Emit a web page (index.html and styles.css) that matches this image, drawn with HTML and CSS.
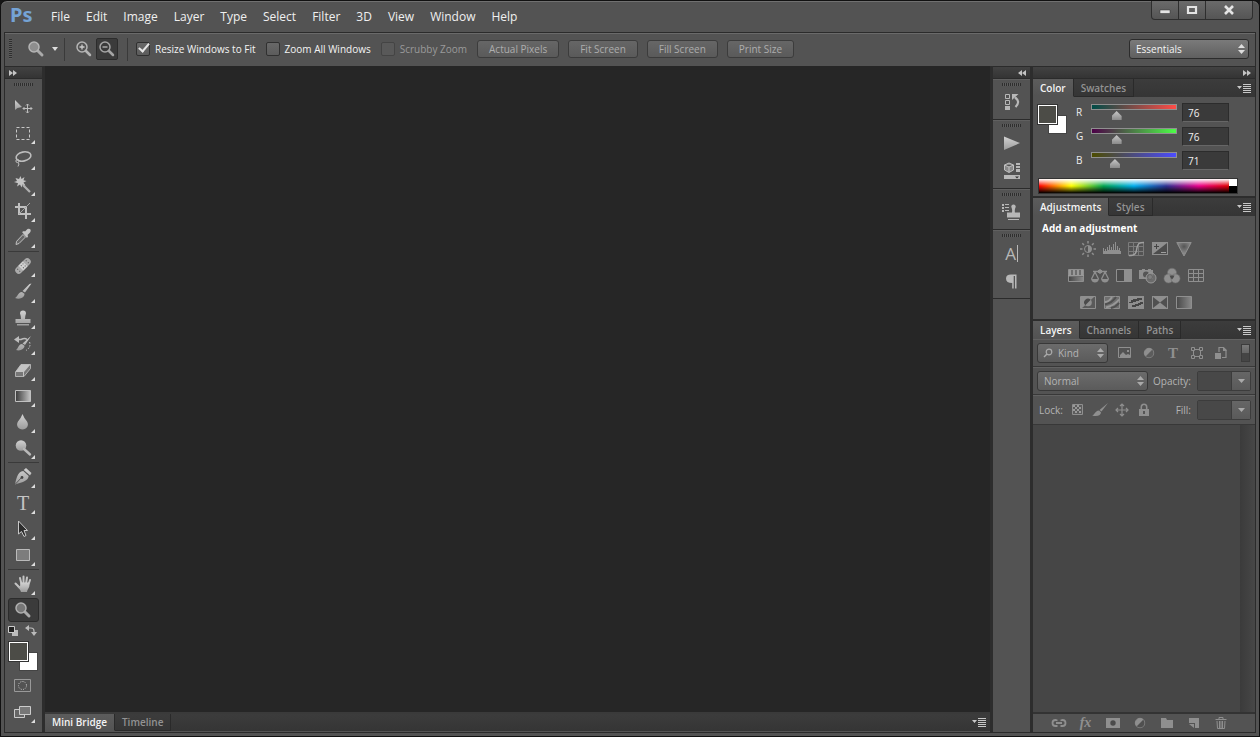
FILE: index.html
```html
<!DOCTYPE html>
<html lang="en">
<head>
    <meta charset="UTF-8">
    <meta name="viewport" content="width=device-width, initial-scale=1.0">
    <title>Ps</title>
    <link rel="stylesheet" href="styles.css">
</head>
<body>

    <!-- Shared gradients -->
    <svg class="defs" width="0" height="0" aria-hidden="true">
        <defs>
            <linearGradient id="metal" x1="0" y1="0" x2="0" y2="1"><stop offset="0" stop-color="#d2d2d2"/><stop offset="1" stop-color="#9c9c9c"/></linearGradient>
            <linearGradient id="fade" x1="0" y1="0" x2="1" y2="0"><stop offset="0" stop-color="#3a3a3a"/><stop offset="1" stop-color="#c4c4c4"/></linearGradient>
            <linearGradient id="fadeDim" x1="0" y1="0" x2="1" y2="0"><stop offset="0" stop-color="#484848"/><stop offset="1" stop-color="#8a8a8a"/></linearGradient>
            <radialGradient id="coneDim" cx="0.5" cy="0.3" r="0.5"><stop offset="0" stop-color="#555"/><stop offset="1" stop-color="#8a8a8a"/></radialGradient>
        </defs>
    </svg>

    <div class="window">

        <!-- Menu bar -->
        <header class="menubar">
            <div class="logo">Ps</div>
            <nav class="menu">
                <a href="#">File</a>
                <a href="#">Edit</a>
                <a href="#">Image</a>
                <a href="#">Layer</a>
                <a href="#">Type</a>
                <a href="#">Select</a>
                <a href="#">Filter</a>
                <a href="#">3D</a>
                <a href="#">View</a>
                <a href="#">Window</a>
                <a href="#">Help</a>
            </nav>
            <div class="window-buttons">
                <button aria-label="Minimize"><svg width="12" height="10" viewBox="0 0 12 10"><path fill="#e4e4e4" stroke="#333" stroke-width=".5" d="M1 5h10v3.500H1z"/></svg></button>
                <button aria-label="Maximize"><svg width="12" height="10" viewBox="0 0 12 10"><path fill="none" stroke="#e4e4e4" stroke-width="2.200" d="M2 2h8v6H2z"/></svg></button>
                <button class="close" aria-label="Close"><svg width="12" height="10" viewBox="0 0 12 10"><path fill="none" stroke="#e4e4e4" stroke-width="2.600" d="M2 1l8 8M10 1L2 9"/></svg></button>
            </div>
        </header>

        <div class="frame">

            <!-- Options bar -->
            <div class="options">
                <span class="grip-vertical"></span>
                <button class="current-tool" aria-label="Zoom tool presets">
                    <svg width="18" height="18" viewBox="0 0 18 18"><path stroke="#aaa" stroke-width="3" stroke-linecap="round" d="M11 11l4 4"/><circle cx="7" cy="7" r="5" fill="#8e8e8e" stroke="#b5b5b5" stroke-width="1.500"/></svg>
                    <svg width="8" height="4" viewBox="0 0 8 4"><path fill="#ddd" d="M1 0h6L4 4z"/></svg>
                </button>
                <span class="divider"></span>
                <button class="zoom-button" aria-label="Zoom in"><svg width="18" height="18" viewBox="0 0 18 18"><path stroke="#b5b5b5" stroke-width="2.500" stroke-linecap="round" d="M11 11l4 4"/><circle cx="7" cy="7" r="5" fill="none" stroke="#b5b5b5" stroke-width="1.500"/><path stroke="#ccc" d="M4.500 7h5M7 4.500v5" stroke-width="1.300"/></svg></button>
                <button class="zoom-button active" aria-label="Zoom out"><svg width="18" height="18" viewBox="0 0 18 18"><path stroke="#a5a5a5" stroke-width="2.500" stroke-linecap="round" d="M11 11l4 4"/><circle cx="7" cy="7" r="5" fill="none" stroke="#a5a5a5" stroke-width="1.500"/><path stroke="#bbb" d="M4.500 7h5" stroke-width="1.300"/></svg></button>
                <span class="divider"></span>
                <label class="check"><input type="checkbox" checked>Resize Windows to Fit</label>
                <label class="check"><input type="checkbox">Zoom All Windows</label>
                <label class="check off"><input type="checkbox" disabled>Scrubby Zoom</label>
                <div class="option-buttons">
                    <button>Actual Pixels</button>
                    <button>Fit Screen</button>
                    <button>Fill Screen</button>
                    <button>Print Size</button>
                </div>
                <div class="select workspace">
                    <select aria-label="Workspace"><option>Essentials</option></select>
                    <svg width="7" height="10" viewBox="0 0 7 10"><path fill="#ddd" d="M0 4h7L3.500 0zM0 6h7l-3.500 4z"/></svg>
                </div>
            </div>

            <div class="work">

                <!-- Toolbar -->
                <aside class="toolbar">
                    <div class="bar"><svg width="8" height="6" viewBox="0 0 8 6"><path fill="#c4c4c4" d="M0 0l4 3-4 3zM4 0l4 3-4 3z"/></svg></div>
                    <span class="grip"></span>
                    <div class="tools">
                        <button aria-label="Move"><svg width="18" height="18" viewBox="0 0 18 18"><path fill="url(#metal)" d="M1 2v10l2.500-2L8 9z"/><path stroke="#bdbdbd" fill="none" d="M9 10.500h9M13.500 6v9M12 7.500l1.500-1.500L15 7.500M12 13.500l1.500 1.500 1.500-1.500M10.500 9L9 10.500l1.500 1.500M16.500 9l1.500 1.500-1.500 1.500"/></svg></button>
                        <button class="more" aria-label="Marquee"><svg width="18" height="18" viewBox="0 0 18 18"><path fill="none" stroke="#c8c8c8" stroke-dasharray="3 2" d="M2.500 3.500h13v12h-13z"/></svg></button>
                        <button class="more" aria-label="Lasso"><svg width="18" height="18" viewBox="0 0 18 18"><g fill="none" stroke="#bdbdbd"><ellipse cx="9.500" cy="6.500" rx="7.500" ry="4.500" stroke-width="1.600" transform="rotate(-12 9.500 6.500)"/><circle cx="3.500" cy="11" r="1.600"/><path d="M4 12.500q2 1 0 4"/></g></svg></button>
                        <button class="more" aria-label="Magic wand"><svg width="18" height="18" viewBox="0 0 18 18"><path stroke="#b0b0b0" stroke-width="2.200" d="M9 9l7 7"/><path fill="#c4c4c4" d="M6.500 0l1 3 3-2-1 3.200 3 .8-3 1.500 2 3-3-1-1 3-1.500-3-3 2 1-3.200L0 6l3-1-1.500-3L5 3z"/></svg></button>
                        <button class="more" aria-label="Crop"><svg width="18" height="18" viewBox="0 0 18 18"><path fill="none" stroke="#c0c0c0" stroke-width="2" d="M5 1v11h12M1 5h11v12"/><path stroke="#a5a5a5" d="M5 12L16 1"/></svg></button>
                        <button class="more" aria-label="Eyedropper"><svg width="18" height="18" viewBox="0 0 18 18"><path fill="#666" stroke="#c0c0c0" d="M9 6.500l2.500 2.500-6.500 6.500-3 1 .6-3.200z"/><path fill="#c4c4c4" d="M8 4l2-1 1 .6L13.500 1q2-.7 3 .6.800 1.500-.5 3L13.500 7l.6 1.300L13 10z"/></svg></button>
                    </div>
                    <div class="tools">
                        <button class="more" aria-label="Healing brush"><svg width="18" height="18" viewBox="0 0 18 18"><g transform="rotate(-45 9 9)"><rect x="-.5" y="5.500" width="19" height="7" rx="3.500" fill="#aaa"/><path fill="#d2d2d2" d="M6 5.500h6v7H6z"/><path fill="#555" d="M7.500 7h1v1h-1zM10 7h1v1h-1zM7.500 10h1v1h-1zM10 10h1v1h-1zM2.500 7h1v1h-1zM2.500 10h1v1h-1zM14.500 7h1v1h-1zM14.500 10h1v1h-1z"/></g></svg></button>
                        <button class="more" aria-label="Brush"><svg width="18" height="18" viewBox="0 0 18 18"><path fill="url(#metal)" d="M17.500.5L11 9.500 8.500 8 15.500 1zM8 9l2.500 1.700c0 3.500-4 6.300-9.500 4.300 2.500-.8 2.500-5.500 7-6z"/></svg></button>
                        <button class="more" aria-label="Clone stamp"><svg width="18" height="18" viewBox="0 0 18 18"><path fill="url(#metal)" d="M6 4.500a3 3 0 116 0Q11 7 11 10h5.500v4h-15v-4H7Q7 7 6 4.500zM3 15h12v1.500H3z"/></svg></button>
                        <button class="more" aria-label="History brush"><svg width="18" height="18" viewBox="0 0 18 18"><path fill="url(#metal)" d="M17 1l-6 9-2.500-1.500zM8 9l2.500 1.700c0 3-4 5.800-8.500 4.300 2-.8 2-5.500 6-6z"/><path fill="none" stroke="#bdbdbd" stroke-width="1.400" d="M2 4.500h5q4-2 6 0"/><path fill="#bdbdbd" d="M0 4.500L5 1v7z"/><path stroke="#ccc" stroke-dasharray="1.500 1.500" fill="none" d="M15.500 7q2 5-3.500 8.500"/></svg></button>
                        <button class="more" aria-label="Eraser"><svg width="18" height="18" viewBox="0 0 18 18"><path fill="#777" stroke="#c4c4c4" stroke-width=".8" d="M1.500 11L7 3.500h9.500v4L10 15.500H1.500z"/><path fill="#c4c4c4" d="M1.500 11L7 3.500h9.500L10 11z"/><path stroke="#c4c4c4" d="M9.500 11v4"/></svg></button>
                        <button class="more" aria-label="Gradient"><svg width="18" height="18" viewBox="0 0 18 18"><path fill="url(#fade)" stroke="#c0c0c0" d="M1.500 3.500h15v11h-15z"/></svg></button>
                        <button class="more" aria-label="Blur"><svg width="18" height="18" viewBox="0 0 18 18"><path fill="url(#metal)" d="M8.500 1Q10 5 13 8.500c2.500 4-.5 8-4.500 8s-7-4-4.500-8Q7 5 8.500 1z"/></svg></button>
                        <button class="more" aria-label="Dodge"><svg width="18" height="18" viewBox="0 0 18 18"><circle cx="7" cy="6.500" r="5.300" fill="url(#metal)"/><path stroke="#b8b8b8" stroke-width="2.400" stroke-linecap="round" d="M10 10l6 5.500"/></svg></button>
                    </div>
                    <div class="tools">
                        <button class="more" aria-label="Pen"><svg width="18" height="18" viewBox="0 0 18 18"><path fill="url(#metal)" d="M12 0l5.500 5-1.500 2.500L9.700 2zM9.200 3l5.500 5c-.7 4.500-5 6-13.700 8.500C2.500 10 3.500 4 9.200 3z"/><circle cx="8" cy="9.500" r="1.400" fill="#454545"/><path stroke="#454545" stroke-width=".8" d="M1.500 16l6-6.500"/></svg></button>
                        <button class="more type" aria-label="Type">T</button>
                        <button class="more" aria-label="Path selection"><svg width="18" height="18" viewBox="0 0 18 18"><path fill="#2c2c2c" stroke="#c8c8c8" d="M4.500 1v13l3-2.500 2.500 5 2-1-2-5h3.500z"/></svg></button>
                        <button class="more" aria-label="Rectangle"><svg width="18" height="18" viewBox="0 0 18 18"><path fill="#7d7d7d" stroke="#bababa" d="M2.500 3.500h13v11h-13z"/></svg></button>
                    </div>
                    <div class="tools last">
                        <button class="more" aria-label="Hand"><svg width="18" height="18" viewBox="0 0 18 18"><path fill="none" stroke="#c4c4c4" stroke-width="2" stroke-linecap="round" d="M7.500 9L6 3M9.500 9V1.500M12 9l1-6.500M14 11l2-6M5.500 12.500L1.500 8.500"/><path fill="url(#metal)" d="M6.500 7.500h8.500l.3 4c-.5 2-2 3-2.300 5.500H7c-.5-2.500-3-4-4-6l3 .5z"/></svg></button>
                        <button class="active" aria-label="Zoom"><svg width="18" height="18" viewBox="0 0 18 18"><path stroke="#aaa" stroke-width="3" stroke-linecap="round" d="M11 11l4 4"/><circle cx="7" cy="7" r="5" fill="#777" stroke="#b0b0b0" stroke-width="1.500"/></svg></button>
                    </div>
                    <div class="swap">
                        <button aria-label="Default colors"><svg width="10" height="10" viewBox="0 0 10 10"><path fill="#bbb" d="M4 4h6v6H4z"/><path fill="#222" stroke="#ccc" d="M.5.5h6v6h-6z"/></svg></button>
                        <button aria-label="Switch colors"><svg width="12" height="11" viewBox="0 0 12 11"><path fill="none" stroke="#bbb" stroke-width="1.200" d="M2 3h4q3 0 3 3v3"/><path fill="#bbb" d="M4 0v6L0 3zM6 7h6l-3 4z"/></svg></button>
                    </div>
                    <div class="chips"><button class="back" aria-label="Background color"></button><button class="fore" aria-label="Foreground color"></button></div>
                    <div class="modes">
                        <button aria-label="Quick mask"><svg width="18" height="14" viewBox="0 0 18 14"><path fill="none" stroke="#999" d="M.5.5h16v12H.5z"/><circle cx="8.500" cy="6.500" r="4" fill="none" stroke="#ccc" stroke-dasharray="1 1.300"/></svg></button>
                        <button class="more" aria-label="Screen mode"><svg width="18" height="14" viewBox="0 0 18 14"><path fill="#666" stroke="#ccc" d="M.5 4.500h10v8H.5z"/><path fill="#777" stroke="#ccc" d="M5.500 1.500h11v8h-11z"/></svg></button>
                    </div>
                </aside>

                <!-- Canvas and bottom tabs -->
                <main class="center">
                    <div class="canvas"></div>
                    <div class="tabs bottom-tabs">
                        <button class="tab selected">Mini Bridge</button>
                        <button class="tab">Timeline</button>
                        <button class="panel-menu" aria-label="Panel menu"><svg width="14" height="9" viewBox="0 0 14 9"><path fill="#c8c8c8" d="M0 2h5L2.500 5zM6 0h8v1H6zM6 2h8v1H6zM6 4h8v1H6zM6 6h8v1H6zM6 8h8v1H6z"/></svg></button>
                    </div>
                </main>

                <!-- Collapsed panels -->
                <aside class="dock">
                    <div class="bar right"><svg width="8" height="6" viewBox="0 0 8 6"><path fill="#c4c4c4" d="M4 0v6L0 3zM8 0v6L4 3z"/></svg></div>
                    <div class="dock-group">
                        <span class="grip"></span>
                        <button aria-label="History"><svg width="18" height="18" viewBox="0 0 18 18"><path fill="none" stroke="#b8b8b8" d="M2.500 1.500h4v4h-4zM2.500 7.500h4v4h-4z"/><path fill="#b8b8b8" d="M2 13h5v4H2z"/><path fill="none" stroke="#b8b8b8" stroke-width="2.200" d="M12 4.500q6 4 .5 9.500"/><path fill="#b8b8b8" d="M9 7V1h6.500z"/></svg></button>
                    </div>
                    <div class="dock-group">
                        <span class="grip"></span>
                        <button aria-label="Actions"><svg width="18" height="18" viewBox="0 0 18 18"><path fill="url(#metal)" d="M1 2.500l16 6.500L1 16z"/></svg></button>
                        <button aria-label="Device preview"><svg width="18" height="18" viewBox="0 0 18 18"><path fill="#888" stroke="#c0c0c0" d="M6 1l4.500 2v5L6 10.500 1.500 8V3zM1.500 3L6 5l4.500-2M6 5v5"/><path fill="#b8b8b8" d="M13 1h4v2h-4zM13 4h4v2h-4zM13 7h4v3h-4zM1 13h16v4H1z"/><path fill="#333" d="M12 14.500h4l-2 2z"/></svg></button>
                    </div>
                    <div class="dock-group">
                        <span class="grip"></span>
                        <button aria-label="Clone source"><svg width="18" height="18" viewBox="0 0 18 18"><path fill="#b8b8b8" d="M-1 1h2v2h-2zM2 1h4v1H2zM-1 4h2v2h-2zM2 4h4v1H2zM-1 7h2v2h-2zM2 7h4v1H2zM8.500 4.500a2.200 2.200 0 114 0q-1 2-.6 5H17v5H4v-5h5q.5-3-.5-5zM5 16h11v1H5z"/></svg></button>
                    </div>
                    <div class="dock-group">
                        <span class="grip"></span>
                        <button class="char" aria-label="Character">A<i></i></button>
                        <button aria-label="Paragraph"><svg width="18" height="18" viewBox="0 0 18 18"><path fill="#b8b8b8" d="M13.500 2.500v14H12V4h-1.300v12.500H9.200V11Q3 11 3 6.500q0-4 5-4z"/></svg></button>
                    </div>
                </aside>

                <!-- Panels -->
                <aside class="panels">
                    <div class="bar right"><svg width="8" height="6" viewBox="0 0 8 6"><path fill="#c4c4c4" d="M0 0l4 3-4 3zM4 0l4 3-4 3z"/></svg></div>

                    <section class="panel">
                        <div class="tabs">
                            <button class="tab selected">Color</button>
                            <button class="tab">Swatches</button>
                            <button class="panel-menu" aria-label="Panel menu"><svg width="14" height="9" viewBox="0 0 14 9"><path fill="#c8c8c8" d="M0 2h5L2.500 5zM6 0h8v1H6zM6 2h8v1H6zM6 4h8v1H6zM6 6h8v1H6zM6 8h8v1H6z"/></svg></button>
                        </div>
                        <div class="color-body">
                            <div class="color-top">
                                <div class="chips"><button class="back" aria-label="Background color"></button><button class="fore" aria-label="Foreground color"></button></div>
                                <div class="channels">
                                    <div class="channel">
                                        <label for="red">R</label>
                                        <input class="red" id="red" type="range" min="0" max="255" value="76">
                                        <input type="text" value="76" aria-label="Red value">
                                    </div>
                                    <div class="channel">
                                        <label for="green">G</label>
                                        <input class="green" id="green" type="range" min="0" max="255" value="76">
                                        <input type="text" value="76" aria-label="Green value">
                                    </div>
                                    <div class="channel">
                                        <label for="blue">B</label>
                                        <input class="blue" id="blue" type="range" min="0" max="255" value="71">
                                        <input type="text" value="71" aria-label="Blue value">
                                    </div>
                                </div>
                            </div>
                            <div class="ramp"><div class="spectrum"></div><div class="extremes"></div></div>
                        </div>
                    </section>

                    <section class="panel">
                        <div class="tabs">
                            <button class="tab selected">Adjustments</button>
                            <button class="tab">Styles</button>
                            <button class="panel-menu" aria-label="Panel menu"><svg width="14" height="9" viewBox="0 0 14 9"><path fill="#c8c8c8" d="M0 2h5L2.500 5zM6 0h8v1H6zM6 2h8v1H6zM6 4h8v1H6zM6 6h8v1H6zM6 8h8v1H6z"/></svg></button>
                        </div>
                        <div class="adjust-body">
                            <h2>Add an adjustment</h2>
                            <div class="adjust-row">
                                <button aria-label="Brightness/Contrast"><svg width="16" height="16" viewBox="0 0 16 16"><circle cx="8" cy="8" r="3.500" fill="none" stroke="#8f8f8f"/><path fill="#8f8f8f" d="M8 4.500a3.500 3.500 0 010 7z"/><path stroke="#8f8f8f" stroke-width="1.500" d="M8 0v2.500M8 13.500V16M0 8h2.500M13.500 8H16M2.300 2.300L4 4M12 12l1.700 1.700M2.300 13.700L4 12M12 4l1.700-1.700"/></svg></button>
                                <button aria-label="Levels"><svg width="18" height="16" viewBox="0 0 18 16"><path fill="#8f8f8f" d="M0 13V7h1v3h1V8h1v2h1V6h1v3h1V4h1v5h1V6h1v3h1V3h1v6h1V1h1v8h1V5h1v4h1V7h1v3h1v3z"/></svg></button>
                                <button aria-label="Curves"><svg width="16" height="16" viewBox="0 0 16 16"><path fill="none" stroke="#7b7b7b" d="M.5 1.500h15v13H.5zM5.500 1v14M10.500 1v14M0 5.500h16M0 10.500h16"/><path fill="none" stroke="#a0a0a0" stroke-width="1.400" d="M1 14.500c8 0 7-4 8-8s2-5 7-5"/></svg></button>
                                <button aria-label="Exposure"><svg width="16" height="16" viewBox="0 0 16 16"><path fill="#8f8f8f" d="M0 1h16v13H0z"/><path fill="#4d4d4d" d="M1 13L15 2v11z"/><path stroke="#444" d="M2 5.500h5M4.500 3v5"/><path stroke="#a0a0a0" d="M9 11.500h5"/></svg></button>
                                <button aria-label="Vibrance"><svg width="16" height="16" viewBox="0 0 16 16"><path fill="url(#coneDim)" stroke="#8f8f8f" d="M.8 1.500h14.400L8 15z"/></svg></button>
                            </div>
                            <div class="adjust-row">
                                <button aria-label="Hue/Saturation"><svg width="16" height="16" viewBox="0 0 16 16"><path fill="#6d6d6d" stroke="#8f8f8f" d="M.5 1.500h15v12H.5z"/><path fill="#999" d="M1 2h2v5H1zM5 2h2v5H5zM9 2h2v5H9zM13 2h2v5h-2zM0 7h16v1H0z"/><path fill="url(#fadeDim)" d="M1 9h14v4H1z"/></svg></button>
                                <button aria-label="Color Balance"><svg width="18" height="16" viewBox="0 0 18 16"><path fill="none" stroke="#8f8f8f" stroke-width="1.300" d="M2 3.500h14M9 1v5M4 4l-3.500 7M4 4l3.500 7M14 4l-3.500 7M14 4l3.500 7"/><path fill="#8f8f8f" d="M0 11h8q-1 3.500-4 3.500T0 11zM10 11h8q-1 3.500-4 3.500T10 11zM7 2h4v3H7z"/></svg></button>
                                <button aria-label="Black &amp; White"><svg width="16" height="16" viewBox="0 0 16 16"><path fill="#4b4b4b" stroke="#8f8f8f" d="M.5 1.500h15v12H.5z"/><path fill="#8f8f8f" d="M8 1h8v13H8z"/></svg></button>
                                <button aria-label="Photo Filter"><svg width="18" height="16" viewBox="0 0 18 16"><path fill="#8f8f8f" d="M0 2h3V1h3v1h3V1h3v1h2v9H0z"/><circle cx="7" cy="6.500" r="3" fill="#555"/><circle cx="12" cy="10" r="5" fill="#777" fill-opacity=".7" stroke="#999"/><circle cx="11" cy="9" r="2.500" fill="none" stroke="#666"/></svg></button>
                                <button aria-label="Channel Mixer"><svg width="16" height="16" viewBox="0 0 16 16"><g fill="#8f8f8f" stroke="#6a6a6a" stroke-width=".6"><circle cx="8" cy="4.800" r="4.600"/><circle cx="4.500" cy="10.500" r="4.600"/><circle cx="11.500" cy="10.500" r="4.600"/></g><path fill="#4b4b4b" d="M5.500 7.500h5l-1 2L8 11.500l-1.500-2z"/></svg></button>
                                <button aria-label="Color Lookup"><svg width="16" height="16" viewBox="0 0 16 16"><path fill="none" stroke="#8f8f8f" d="M.5 1.500h15v12H.5zM5.500 1v13M10.500 1v13M0 5.500h16M0 9.500h16"/></svg></button>
                            </div>
                            <div class="adjust-row">
                                <button aria-label="Invert"><svg width="16" height="16" viewBox="0 0 16 16"><path fill="#5a5a5a" stroke="#8f8f8f" d="M.5 1.500h15v12H.5z"/><path fill="#8f8f8f" d="M1 2h13L1 14z"/><circle cx="8" cy="7.500" r="3.800" fill="#8f8f8f"/><path fill="#4b4b4b" d="M5.300 10.200a3.800 3.800 0 015.400-5.400z"/></svg></button>
                                <button aria-label="Posterize"><svg width="16" height="16" viewBox="0 0 16 16"><path fill="#707070" stroke="#8f8f8f" d="M.5 1.500h15v12H.5z"/><path fill="none" stroke="#999" stroke-width="2" d="M1 7q4 0 7-5M2 12.500Q11 10 15 4.500"/><path fill="none" stroke="#505050" stroke-width="2" d="M1 9.500Q8 8 12 2M7 13Q12 12 15 8"/></svg></button>
                                <button aria-label="Threshold"><svg width="16" height="16" viewBox="0 0 16 16"><path fill="#8f8f8f" d="M0 1h16v13H0z"/><path fill="#454545" d="M1 7h2V5h2V4h4V3h5v2h-3v1H8v1H5v1H1zM4 12V10h3V9h3V8h2V7h3v2h-2v1h-2v1H8v1z"/></svg></button>
                                <button aria-label="Selective Color"><svg width="16" height="16" viewBox="0 0 16 16"><path fill="#8f8f8f" d="M0 1h16v13H0z"/><path fill="#505050" d="M1 2l7 5.500L1 13zM15 2L8 7.500l7 5.500z"/></svg></button>
                                <button aria-label="Gradient Map"><svg width="16" height="16" viewBox="0 0 16 16"><path fill="url(#fadeDim)" stroke="#8f8f8f" d="M.5 1.500h15v12H.5z"/></svg></button>
                            </div>
                        </div>
                    </section>

                    <section class="panel layers">
                        <div class="tabs">
                            <button class="tab selected">Layers</button>
                            <button class="tab">Channels</button>
                            <button class="tab">Paths</button>
                            <button class="panel-menu" aria-label="Panel menu"><svg width="14" height="9" viewBox="0 0 14 9"><path fill="#c8c8c8" d="M0 2h5L2.500 5zM6 0h8v1H6zM6 2h8v1H6zM6 4h8v1H6zM6 6h8v1H6zM6 8h8v1H6z"/></svg></button>
                        </div>
                        <div class="layer-row">
                            <div class="select kind">
                                <svg class="lens" width="10" height="10" viewBox="0 0 10 10"><circle cx="6" cy="4" r="2.800" fill="none" stroke="#aaa" stroke-width="1.200"/><path stroke="#aaa" stroke-width="1.500" d="M4 6L1 9"/></svg>
                                <select aria-label="Filter type"><option>Kind</option></select>
                                <svg width="7" height="10" viewBox="0 0 7 10"><path fill="#aaa" d="M0 4h7L3.500 0zM0 6h7l-3.500 4z"/></svg>
                            </div>
                            <div class="filters">
                                <button aria-label="Pixel layers"><svg width="14" height="14" viewBox="0 0 14 14"><path fill="none" stroke="#8f8f8f" d="M.5 1.500h12v10H.5z"/><path fill="#8f8f8f" d="M2 11V9l3-3 3 3 2-1 2 1v2zM9 4h2v2H9z"/></svg></button>
                                <button aria-label="Adjustment layers"><svg width="14" height="14" viewBox="0 0 14 14"><circle cx="7" cy="7" r="4.700" fill="#8f8f8f" stroke="#8f8f8f"/><path fill="#5c5c5c" d="M10.200 3.800a4.500 4.500 0 01-6.400 6.400z"/></svg></button>
                                <button class="type-small" aria-label="Type layers">T</button>
                                <button aria-label="Shape layers"><svg width="14" height="14" viewBox="0 0 14 14"><path fill="none" stroke="#8f8f8f" d="M3.500 4v6M10.500 4v6M4 3.500h6M4 10.500h6M1.500 1.500h3v3h-3zM9.500 1.500h3v3h-3zM1.500 9.500h3v3h-3zM9.500 9.500h3v3h-3z"/></svg></button>
                                <button aria-label="Smart objects"><svg width="14" height="14" viewBox="0 0 14 14"><path fill="none" stroke="#8f8f8f" stroke-width="1.200" d="M5 6V1.500h4.500L12 4v7.500H8"/><path fill="#8f8f8f" d="M1 7h6v6H1zM9 1v4h4z"/></svg></button>
                            </div>
                            <button class="filter-toggle" aria-label="Turn filtering on"></button>
                        </div>
                        <div class="layer-row">
                            <div class="select blend">
                                <select aria-label="Blend mode"><option>Normal</option></select>
                                <svg width="7" height="10" viewBox="0 0 7 10"><path fill="#aaa" d="M0 4h7L3.500 0zM0 6h7l-3.500 4z"/></svg>
                            </div>
                            <label class="field-label" for="opacity">Opacity:</label>
                            <div class="field"><input id="opacity" type="text"><button aria-label="Opacity slider"><svg width="7" height="4" viewBox="0 0 7 4"><path fill="#aaa" d="M0 0h7L3.500 4z"/></svg></button></div>
                        </div>
                        <div class="layer-row lock-row">
                            <span class="lock-label">Lock:</span>
                            <div class="locks">
                                <button aria-label="Lock transparent pixels"><svg width="14" height="14" viewBox="0 0 14 14"><path fill="#5c5c5c" stroke="#8f8f8f" d="M1.500 1.500h10v10h-10z"/><path fill="#999" d="M2 2h2v2H2zM6 2h2v2H6zM4 4h2v2H4zM8 4h2v2H8zM2 6h2v2H2zM6 6h2v2H6zM4 8h2v2H4zM8 8h2v2H8z"/></svg></button>
                                <button aria-label="Lock image pixels"><svg width="16" height="14" viewBox="0 0 16 14"><path fill="#8f8f8f" d="M16 0L9.500 8.500 7.500 7zM7 7.500l2 1.700c0 3-3.500 5-9 3.300 3-.5 2.500-4.500 7-5z"/></svg></button>
                                <button aria-label="Lock position"><svg width="14" height="14" viewBox="0 0 14 14"><path fill="none" stroke="#8f8f8f" stroke-width="1.200" d="M1 7h12M7 1v12M5 3l2-2 2 2M5 11l2 2 2-2M3 5L1 7l2 2M11 5l2 2-2 2"/></svg></button>
                                <button aria-label="Lock all"><svg width="14" height="14" viewBox="0 0 14 14"><path fill="none" stroke="#8f8f8f" stroke-width="1.600" d="M4.300 6.500V4a2.700 2.700 0 015.400 0v2.500"/><path fill="#8f8f8f" d="M2 6h10v7H2z"/><path fill="#555" d="M6 8h2v3H6z"/></svg></button>
                            </div>
                            <label class="field-label" for="fill">Fill:</label>
                            <div class="field"><input id="fill" type="text"><button aria-label="Fill slider"><svg width="7" height="4" viewBox="0 0 7 4"><path fill="#aaa" d="M0 0h7L3.500 4z"/></svg></button></div>
                        </div>
                        <div class="layer-list"><div class="scroll-track"></div></div>
                        <div class="layer-actions">
                            <button aria-label="Link layers"><svg width="16" height="14" viewBox="0 0 16 14"><path fill="none" stroke="#8f8f8f" stroke-width="1.800" d="M6.500 4.500L4.500 4A3 3 0 004.500 10h2M9.500 4.500l2-.5a3 3 0 010 6h-2M5 7h6"/></svg></button>
                            <button class="fx" aria-label="Layer style">fx</button>
                            <button aria-label="Add mask"><svg width="14" height="14" viewBox="0 0 14 14"><path fill="#8f8f8f" d="M0 2h14v10H0z"/><circle cx="7" cy="7" r="2.700" fill="#4b4b4b"/></svg></button>
                            <button aria-label="New adjustment layer"><svg width="14" height="14" viewBox="0 0 14 14"><circle cx="7" cy="7" r="4.700" fill="#8f8f8f" stroke="#8f8f8f"/><path fill="#505050" d="M10.200 3.800a4.500 4.500 0 01-6.400 6.400z"/></svg></button>
                            <button aria-label="New group"><svg width="14" height="14" viewBox="0 0 14 14"><path fill="#8f8f8f" d="M1 2h5l1 2h6v8H1z"/></svg></button>
                            <button aria-label="New layer"><svg width="14" height="14" viewBox="0 0 14 14"><path fill="#8f8f8f" d="M2 2h10v10H8V7H2z"/><path fill="#8f8f8f" d="M2 8l5 4V8z"/></svg></button>
                            <button aria-label="Delete layer"><svg width="14" height="14" viewBox="0 0 14 14"><path fill="none" stroke="#8f8f8f" d="M5 3V1.500h4V3M1.500 3.500h11M3 5l.5 7.500h7L11 5M5.500 5v7M7 5v7M8.500 5v7"/></svg></button>
                        </div>
                    </section>
                </aside>
            </div>
        </div>
    </div>

</body>
</html>
```

FILE: styles.css
```css
/* Reset default styles */
* {
    margin: 0;
    padding: 0;
    box-sizing: border-box;
}

body {
    background-color: #151515;
    color: #e6e6e6;
    font-family: "Open Sans", "Noto Sans", sans-serif;
    font-size: 10px;
}

button,
input,
select {
    font: inherit;
    color: inherit;
    border: none;
    background: none;
}

svg {
    display: block;
    overflow: visible;
    flex: none;
}

.defs {
    position: absolute;
}

.window {
    min-height: 100vh;
    display: flex;
    flex-direction: column;
    background-color: #535353;
    border: 1px solid #111;
    border-radius: 7px 7px 0 0;
    box-shadow: inset 0 1px 0 #707070;
    padding: 0 3px 3px;
}

/* Menu bar */
.menubar {
    height: 31px;
    display: flex;
    align-items: center;
}

.logo {
    width: 39px;
    padding: 0 0 4px 6px;
    font-family: "Noto Sans", sans-serif;
    font-size: 20px;
    font-weight: bold;
    line-height: 26px;
    color: #75a3d5;
}

.menu {
    display: flex;
}

.menu a {
    padding: 0 8px;
    font-size: 12px;
    color: #f0f0f0;
    text-decoration: none;
}

.window-buttons {
    display: flex;
    align-self: flex-start;
    margin-left: auto;
    margin-right: 3px;
    border: 1px solid #2e2e2e;
    border-top: none;
    border-radius: 0 0 4px 4px;
    background: linear-gradient(#6a6a6a, #555);
}

.window-buttons button {
    width: 27px;
    height: 18px;
    display: flex;
    justify-content: center;
    align-items: center;
    border-right: 1px solid #2e2e2e;
}

.window-buttons .close {
    width: 46px;
    border-right: none;
}

.frame {
    flex: 1;
    display: flex;
    flex-direction: column;
    border: 1px solid #2b2b2b;
}

/* Options bar */
.options {
    height: 33px;
    display: flex;
    align-items: center;
    border-top: 1px solid #6a6a6a;
    padding: 0 6px 2px 4px;
}

.grip-vertical {
    width: 3px;
    height: 20px;
    background: repeating-linear-gradient(#2e2e2e 0 1px, #5d5d5d 1px 2px);
}

.current-tool {
    display: flex;
    align-items: center;
    gap: 6px;
    margin-left: 15px;
}

.divider {
    width: 1px;
    height: 23px;
    background-color: #3a3a3a;
    margin: 0 8px 0 5px;
}

.zoom-button {
    width: 22px;
    height: 22px;
    margin-right: 1px;
    display: flex;
    justify-content: center;
    align-items: center;
    border: 1px solid transparent;
    border-radius: 2px;
}

.zoom-button.active {
    background-color: #3b3b3b;
    border-color: #2c2c2c;
    margin-right: 4px;
}

.check {
    display: flex;
    align-items: center;
    gap: 5px;
    margin-right: 10px;
    color: #f4f4f4;
    white-space: nowrap;
}

.check input {
    appearance: none;
    position: relative;
    width: 14px;
    height: 14px;
    border: 1px solid #303030;
    border-radius: 2px;
    background: linear-gradient(#686868, #5c5c5c);
}

.check input:checked::after {
    content: "";
    position: absolute;
    left: 4px;
    top: -2px;
    width: 4px;
    height: 9px;
    border: solid #e6e6e6;
    border-width: 0 2px 2px 0;
    transform: rotate(40deg);
}

.check.off {
    color: #9a9a9a;
}

.check.off input {
    border-color: #444;
    background: #595959;
}

.option-buttons {
    display: flex;
    gap: 9px;
}

.option-buttons button {
    height: 18px;
    padding: 0 11px;
    border: 1px solid #3c3c3c;
    border-radius: 3px;
    background: linear-gradient(#666, #5a5a5a);
    color: #adadad;
    white-space: nowrap;
}

/* Drop-downs */
.select {
    position: relative;
    height: 20px;
    border: 1px solid #383838;
    border-radius: 3px;
    background: linear-gradient(#6b6b6b, #5b5b5b);
    color: #b4b4b4;
}

.select select {
    appearance: none;
    width: 100%;
    height: 100%;
    padding: 0 16px 0 6px;
}

.select svg {
    position: absolute;
    right: 3px;
    top: 4px;
}

.select .lens {
    left: 5px;
}

.workspace {
    width: 120px;
    margin-left: auto;
    border-color: #2c2c2c;
    background: linear-gradient(#7a7a7a, #5f5f5f);
    color: #f4f4f4;
}

/* Work area */
.work {
    flex: 1;
    display: grid;
    grid-template-columns: 37px 1fr 37px 222px;
    gap: 3px;
    background-color: #2d2d2d;
}

.bar {
    height: 13px;
    display: flex;
    align-items: center;
    padding: 0 4px;
    border: solid #2b2b2b;
    border-width: 1px 0;
    background: linear-gradient(#424242, #343434);
}

.bar.right {
    justify-content: flex-end;
}

.grip {
    display: block;
    width: 19px;
    height: 3px;
    margin: 4px auto 2px;
    background: repeating-linear-gradient(90deg, #2e2e2e 0 1px, #5d5d5d 1px 2px);
}

/* Toolbar */
.toolbar {
    background-color: #535353;
    display: flex;
    flex-direction: column;
}

.toolbar .grip {
    margin-bottom: 7px;
}

.tools {
    margin: 0 3px;
    padding: 1px 0;
    border-bottom: 1px solid #3a3a3a;
}

.tools.last {
    border-bottom: none;
}

.tools button,
.modes button {
    position: relative;
    width: 31px;
    height: 26px;
    padding-right: 1px;
    display: flex;
    justify-content: center;
    align-items: center;
}

.tools .active {
    height: 24px;
    margin-top: 1px;
    border: 1px solid #2c2c2c;
    border-radius: 3px;
    background-color: #3b3b3b;
}

.more::after {
    content: "";
    position: absolute;
    right: 4px;
    bottom: 2px;
    border: 2px solid transparent;
    border-right-color: #ddd;
    border-bottom-color: #ddd;
}

.tools .type {
    font-family: "Liberation Serif", serif;
    font-size: 20px;
    color: #c4c4c4;
}

.swap {
    display: flex;
    gap: 7px;
    align-items: center;
    padding: 2px 3px 1px;
}

.chips {
    display: grid;
    grid-template-columns: 10px 9px 10px;
    grid-template-rows: 10px 9px 10px;
}

.toolbar .chips {
    margin: 5px 4px 2px;
}

.chips .back {
    grid-area: 2 / 2 / 4 / 4;
    background-color: #fff;
    border: 1px solid #444;
}

.chips .fore {
    grid-area: 1 / 1 / 3 / 3;
    background-color: #4c4c47;
    border: 1px solid #fff;
    box-shadow: 0 0 0 1px #333;
}

.modes {
    margin: 0 3px;
}

/* Canvas */
.center {
    display: flex;
    flex-direction: column;
}

.canvas {
    flex: 1;
    background-color: #262626;
}

/* Tabs */
.tabs {
    height: 18px;
    display: flex;
    background: linear-gradient(#3c3c3c, #353535);
}

.tab {
    padding: 0 7px;
    border-right: 1px solid #2a2a2a;
    border-bottom: 1px solid #2a2a2a;
    color: #939393;
    font-weight: 600;
    white-space: nowrap;
}

.tab.selected {
    background: linear-gradient(#5c5c5c, #535353);
    border-bottom-color: #535353;
    color: #f4f4f4;
}

.panel-menu {
    margin-left: auto;
    padding-right: 4px;
}

.bottom-tabs {
    height: 20px;
    border-top: 2px solid #3a3a3a;
    border-bottom: 1px solid #535353;
}

/* Collapsed panels */
.dock {
    background-color: #535353;
}

.dock-group {
    padding-bottom: 3px;
    border-bottom: 1px solid #2b2b2b;
    box-shadow: inset 0 1px 0 #606060;
    display: flow-root;
}

.dock-group button {
    width: 37px;
    height: 28px;
    display: flex;
    justify-content: center;
    align-items: center;
}

.dock-group .char {
    font-size: 17px;
    color: #b8b8b8;
}

.char i {
    width: 1px;
    height: 17px;
    margin-left: 1px;
    background-color: #b8b8b8;
}

/* Panels */
.panels {
    display: flex;
    flex-direction: column;
}

.panel {
    margin-bottom: 2px;
    background-color: #535353;
}

/* Color panel */
.color-body {
    padding: 6px 5px 2px;
}

.color-top {
    display: flex;
}

.color-top .chips {
    margin-top: 2px;
}

.channels {
    flex: 1;
    min-width: 0;
}

.channel {
    height: 24px;
    display: flex;
    align-items: flex-start;
    padding-left: 9px;
}

.channel label {
    width: 10px;
    line-height: 18px;
    color: #eee;
}

.channel input[type="range"] {
    appearance: none;
    flex: 1;
    min-width: 0;
    height: 16px;
    margin-top: 1px;
}

.channel .red {
    background:
        linear-gradient(90deg, #004c47, #ff4c47) no-repeat 6px 1px / calc(100% - 12px) 4px,
        linear-gradient(#909090, #909090) no-repeat 5px 0 / calc(100% - 10px) 6px;
}

.channel .green {
    background:
        linear-gradient(90deg, #4c0047, #4cff47) no-repeat 6px 1px / calc(100% - 12px) 4px,
        linear-gradient(#909090, #909090) no-repeat 5px 0 / calc(100% - 10px) 6px;
}

.channel .blue {
    background:
        linear-gradient(90deg, #4c4c00, #4c4cff) no-repeat 6px 1px / calc(100% - 12px) 4px,
        linear-gradient(#909090, #909090) no-repeat 5px 0 / calc(100% - 10px) 6px;
}

.channel input[type="range"]::-webkit-slider-thumb {
    appearance: none;
    width: 10px;
    height: 9px;
    margin-top: 7px;
    background: linear-gradient(#c8c8c8, #8a8a8a);
    clip-path: polygon(50% 0, 100% 55%, 100% 100%, 0 100%, 0 55%);
}

.channel input[type="text"] {
    flex: none;
    width: 47px;
    height: 19px;
    margin-right: 21px;
    padding-left: 5px;
    border: 1px solid #2c2c2c;
    border-bottom-color: #666;
    background-color: #3a3a3a;
    color: #f0f0f0;
}

.ramp {
    width: 200px;
    height: 16px;
    margin-top: 3px;
    display: flex;
    border: 1px solid #333;
}

.spectrum {
    flex: 1;
    background:
        linear-gradient(#fff, transparent 50%, #000),
        linear-gradient(90deg, #f00, #ff0 17%, #00a651 34%, #00aeef 50%, #2e3192 67%, #ec008c 84%, #e00000);
}

.extremes {
    width: 8px;
    background: linear-gradient(#fff 50%, #000 50%);
}

/* Adjustments panel */
.adjust-body {
    height: 103px;
    padding: 5px 16px 0 0;
}

.adjust-body h2 {
    padding-left: 9px;
    font-size: 10px;
    line-height: 14px;
    color: #fff;
}

.adjust-row {
    height: 27px;
    display: flex;
    justify-content: center;
    align-items: center;
    gap: 2px;
}

.adjust-row button {
    width: 22px;
    display: flex;
    justify-content: center;
}

/* Layers panel */
.layers {
    flex: 1;
    display: flex;
    flex-direction: column;
    margin-bottom: 0;
}

.layer-row {
    height: 28px;
    display: flex;
    align-items: center;
    padding: 0 4px;
    border-top: 1px solid #626262;
    border-bottom: 1px solid #383838;
    color: #b4b4b4;
}

.lock-row {
    height: 30px;
}

.kind {
    width: 71px;
}

.kind select {
    padding-left: 20px;
}

.blend {
    width: 111px;
}

.filters {
    display: flex;
    margin-left: 5px;
}

.filters button {
    width: 24px;
    height: 18px;
    display: flex;
    justify-content: center;
    align-items: center;
}

.filters .type-small {
    font-family: "Liberation Serif", serif;
    font-size: 15px;
    font-weight: bold;
    color: #8f8f8f;
}

.filter-toggle {
    width: 9px;
    height: 18px;
    margin-left: auto;
    margin-right: 1px;
    border: 1px solid #3c3c3c;
    background: linear-gradient(#7a7a7a, #656565 8px, #454545 8px);
}

.field-label {
    margin-left: auto;
    margin-right: 6px;
}

.field {
    width: 54px;
    height: 20px;
    display: flex;
    border: 1px solid #3c3c3c;
    border-radius: 2px;
}

.field input {
    flex: 1;
    min-width: 0;
    background-color: #484848;
}

.field button {
    width: 19px;
    display: flex;
    justify-content: center;
    align-items: center;
    border-left: 1px solid #3c3c3c;
    background: linear-gradient(#666, #5a5a5a);
}

.lock-label {
    width: 30px;
    padding-left: 2px;
}

.locks {
    display: flex;
}

.locks button {
    width: 22px;
    display: flex;
    justify-content: center;
}

.layer-list {
    flex: 1;
    display: flex;
    justify-content: flex-end;
    background-color: #464646;
}

.scroll-track {
    width: 15px;
    background: linear-gradient(90deg, #3b3b3b, #474747);
}

.layer-actions {
    height: 20px;
    display: flex;
    align-items: center;
    padding-left: 12px;
    border-top: 2px solid #333;
}

.layer-actions button {
    width: 27px;
    display: flex;
    justify-content: center;
}

.layer-actions .fx {
    font-family: "Liberation Serif", serif;
    font-size: 14px;
    font-style: italic;
    font-weight: bold;
    line-height: 16px;
    color: #8f8f8f;
}
```
